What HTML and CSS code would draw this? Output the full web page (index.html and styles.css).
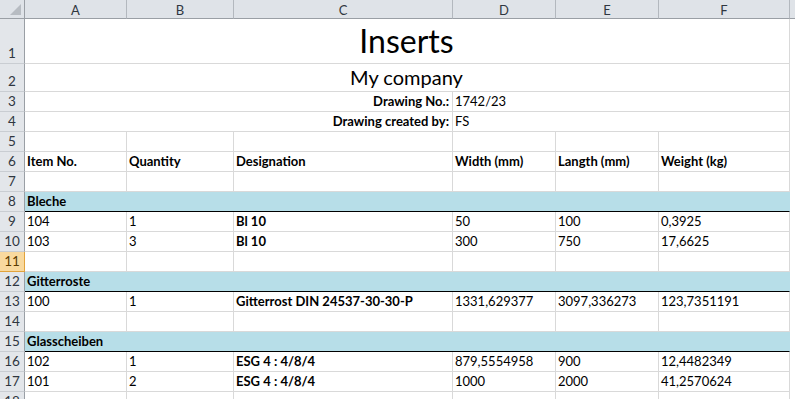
FILE: index.html
```html
<!DOCTYPE html>
<html lang="en">
<head>
  <meta charset="UTF-8" />
  <title>Inserts</title>
  <link rel="stylesheet" href="styles.css">
</head>
<body>
  <div class="sheet">
    <div class="row head">
      <div class="corner"></div>
      <div class="col">A</div>
      <div class="col">B</div>
      <div class="col">C</div>
      <div class="col">D</div>
      <div class="col">E</div>
      <div class="col">F</div>
    </div>

    <div class="row r-title">
      <div class="num">1</div>
      <div class="cell span6 title">Inserts</div>
    </div>
    <div class="row r-sub">
      <div class="num">2</div>
      <div class="cell span6 subtitle">My company</div>
    </div>
    <div class="row">
      <div class="num">3</div>
      <div class="cell span3 right b">Drawing No.:</div>
      <div class="cell span3">1742/23</div>
    </div>
    <div class="row">
      <div class="num">4</div>
      <div class="cell span3 right b">Drawing created by:</div>
      <div class="cell span3">FS</div>
    </div>
    <div class="row">
      <div class="num">5</div>
      <div class="cell"></div><div class="cell"></div><div class="cell"></div>
      <div class="cell"></div><div class="cell"></div><div class="cell"></div>
    </div>
    <div class="row">
      <div class="num">6</div>
      <div class="cell b">Item No.</div>
      <div class="cell b">Quantity</div>
      <div class="cell b">Designation</div>
      <div class="cell b">Width (mm)</div>
      <div class="cell b">Langth (mm)</div>
      <div class="cell b">Weight (kg)</div>
    </div>
    <div class="row">
      <div class="num">7</div>
      <div class="cell"></div><div class="cell"></div><div class="cell"></div>
      <div class="cell"></div><div class="cell"></div><div class="cell"></div>
    </div>

    <div class="row">
      <div class="num">8</div>
      <div class="cell span6 group">Bleche</div>
    </div>
    <div class="row">
      <div class="num">9</div>
      <div class="cell">104</div>
      <div class="cell">1</div>
      <div class="cell b">Bl 10</div>
      <div class="cell">50</div>
      <div class="cell">100</div>
      <div class="cell">0,3925</div>
    </div>
    <div class="row">
      <div class="num">10</div>
      <div class="cell">103</div>
      <div class="cell">3</div>
      <div class="cell b">Bl 10</div>
      <div class="cell">300</div>
      <div class="cell">750</div>
      <div class="cell">17,6625</div>
    </div>
    <div class="row">
      <div class="num active">11</div>
      <div class="cell"></div><div class="cell"></div><div class="cell"></div>
      <div class="cell"></div><div class="cell"></div><div class="cell"></div>
    </div>

    <div class="row">
      <div class="num">12</div>
      <div class="cell span6 group">Gitterroste</div>
    </div>
    <div class="row">
      <div class="num">13</div>
      <div class="cell">100</div>
      <div class="cell">1</div>
      <div class="cell b">Gitterrost DIN 24537-30-30-P</div>
      <div class="cell">1331,629377</div>
      <div class="cell">3097,336273</div>
      <div class="cell">123,7351191</div>
    </div>
    <div class="row">
      <div class="num">14</div>
      <div class="cell"></div><div class="cell"></div><div class="cell"></div>
      <div class="cell"></div><div class="cell"></div><div class="cell"></div>
    </div>

    <div class="row">
      <div class="num">15</div>
      <div class="cell span6 group">Glasscheiben</div>
    </div>
    <div class="row">
      <div class="num">16</div>
      <div class="cell">102</div>
      <div class="cell">1</div>
      <div class="cell b">ESG 4 : 4/8/4</div>
      <div class="cell">879,5554958</div>
      <div class="cell">900</div>
      <div class="cell">12,4482349</div>
    </div>
    <div class="row">
      <div class="num">17</div>
      <div class="cell">101</div>
      <div class="cell">2</div>
      <div class="cell b">ESG 4 : 4/8/4</div>
      <div class="cell">1000</div>
      <div class="cell">2000</div>
      <div class="cell">41,2570624</div>
    </div>
    <div class="row">
      <div class="num">18</div>
      <div class="cell"></div><div class="cell"></div><div class="cell"></div>
      <div class="cell"></div><div class="cell"></div><div class="cell"></div>
    </div>
  </div>
</body>
</html>
```

FILE: styles.css
```css
html, body {
  margin: 0;
  height: 100%;
  overflow: hidden;
}
body {
  font-family: 'Lato', 'Liberation Sans', sans-serif;
  font-size: 13px;
  color: #000;
  /* header strip keeps going past the last column */
  background: linear-gradient(#dfe3e8 0 18px, #9a9fa5 18px 19px, #fff 19px);
}
.sheet {
  width: 790px;
}
.row {
  display: grid;
  grid-template-columns: 25px 102px 107px 219px 103px 103px 131px;
  height: 20px;
}
.row.head { height: 19px; }
.row.r-title { height: 45px; }
.row.r-sub { height: 28px; }

.corner, .col, .num, .cell {
  box-sizing: border-box;
  display: flex;
  white-space: nowrap;
  min-width: 0;
}

/* column letters */
.corner {
  position: relative;
  background: #dfe3e8;
  border-right: 1px solid #9a9fa5;
  border-bottom: 1px solid #9a9fa5;
}
.corner::after {
  content: "";
  position: absolute;
  right: 3px;
  bottom: 3px;
  border-left: 11px solid transparent;
  border-bottom: 11px solid #b7bcc2;
}
.col {
  justify-content: center;
  align-items: center;
  background: #dfe3e8;
  color: #2f3640;
  border-right: 1px solid #b3b8be;
  border-bottom: 1px solid #9a9fa5;
  padding-top: 1px;
}

/* row numbers */
.num {
  justify-content: center;
  align-items: flex-end;
  background: #e3e6ea;
  color: #2f3640;
  font-size: 13.5px;
  border-right: 1px solid #9a9fa5;
  border-bottom: 1px solid #c9cdd2;
  line-height: 17px;
  padding-bottom: 1px;
}
.num.active {
  background: #f9d99e;
  color: #5b3b00;
  border-right-color: #e2a33c;
  border-bottom-color: #e2a33c;
}

/* cells */
.cell {
  align-items: flex-end;
  padding: 0 3px 1px 2px;
  line-height: 17px;
  border-right: 1px solid #d9d9d9;
  border-bottom: 1px solid #d9d9d9;
  overflow: visible;
}
.span3 { grid-column: span 3; }
.span6 { grid-column: span 6; }
.b { font-weight: bold; }
.right { justify-content: flex-end; }

.title {
  justify-content: center;
  font-size: 32px;
  line-height: 38px;
  padding-bottom: 3px;
}
.subtitle {
  justify-content: center;
  font-size: 20px;
  line-height: 24px;
  padding-bottom: 2px;
}

/* section rows */
.group {
  background: #b7dee8;
  border-right-color: #b7dee8;
  border-bottom: 1px solid #000;
  font-weight: bold;
}
```
